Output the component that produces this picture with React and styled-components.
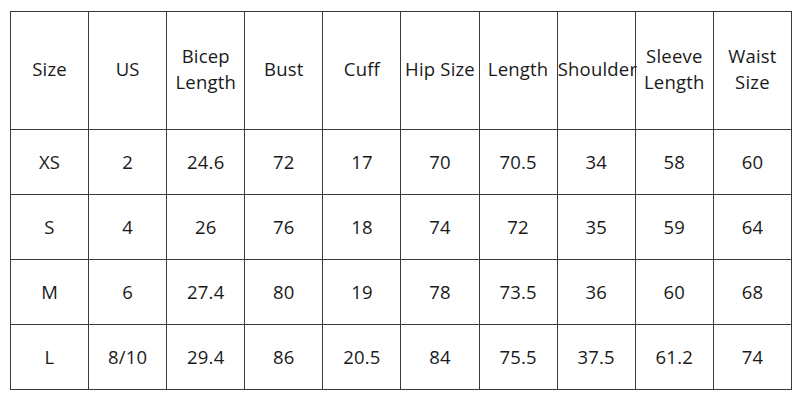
import styled, { createGlobalStyle } from "styled-components";

const GlobalStyle = createGlobalStyle`
  html, body {
    margin: 0;
    padding: 0;
    background: #ffffff;
  }
  body {
    font-family: "Open Sans", "Liberation Sans", sans-serif;
  }
`;

const Page = styled.div`
  width: 800px;
  height: 400px;
  padding: 11px 0 0 10px;
  box-sizing: border-box;
`;

const Table = styled.table`
  width: 782px;
  border-collapse: collapse;
  table-layout: fixed;
  color: #1a1a1a;
  font-size: 18.5px;
  letter-spacing: 0.2px;
`;

const HeadCell = styled.th`
  height: 114px;
  border: 1px solid #3a3a3a;
  font-weight: 400;
  line-height: 26px;
  padding: 0 0 3px;
  text-align: center;
`;

const Cell = styled.td`
  height: 62px;
  border: 1px solid #3a3a3a;
  padding: 0 0 2px;
  text-align: center;
`;

const headers = [
  "Size",
  "US",
  "Bicep Length",
  "Bust",
  "Cuff",
  "Hip Size",
  "Length",
  "Shoulder",
  "Sleeve Length",
  "Waist Size",
];

const rows = [
  ["XS", "2", "24.6", "72", "17", "70", "70.5", "34", "58", "60"],
  ["S", "4", "26", "76", "18", "74", "72", "35", "59", "64"],
  ["M", "6", "27.4", "80", "19", "78", "73.5", "36", "60", "68"],
  ["L", "8/10", "29.4", "86", "20.5", "84", "75.5", "37.5", "61.2", "74"],
];

export default function App() {
  return (
    <Page>
      <GlobalStyle />
      <Table>
        <thead>
          <tr>
            {headers.map((h) => (
              <HeadCell key={h}>{h}</HeadCell>
            ))}
          </tr>
        </thead>
        <tbody>
          {rows.map((r) => (
            <tr key={r[0]}>
              {r.map((v, i) => (
                <Cell key={i}>{v}</Cell>
              ))}
            </tr>
          ))}
        </tbody>
      </Table>
    </Page>
  );
}
